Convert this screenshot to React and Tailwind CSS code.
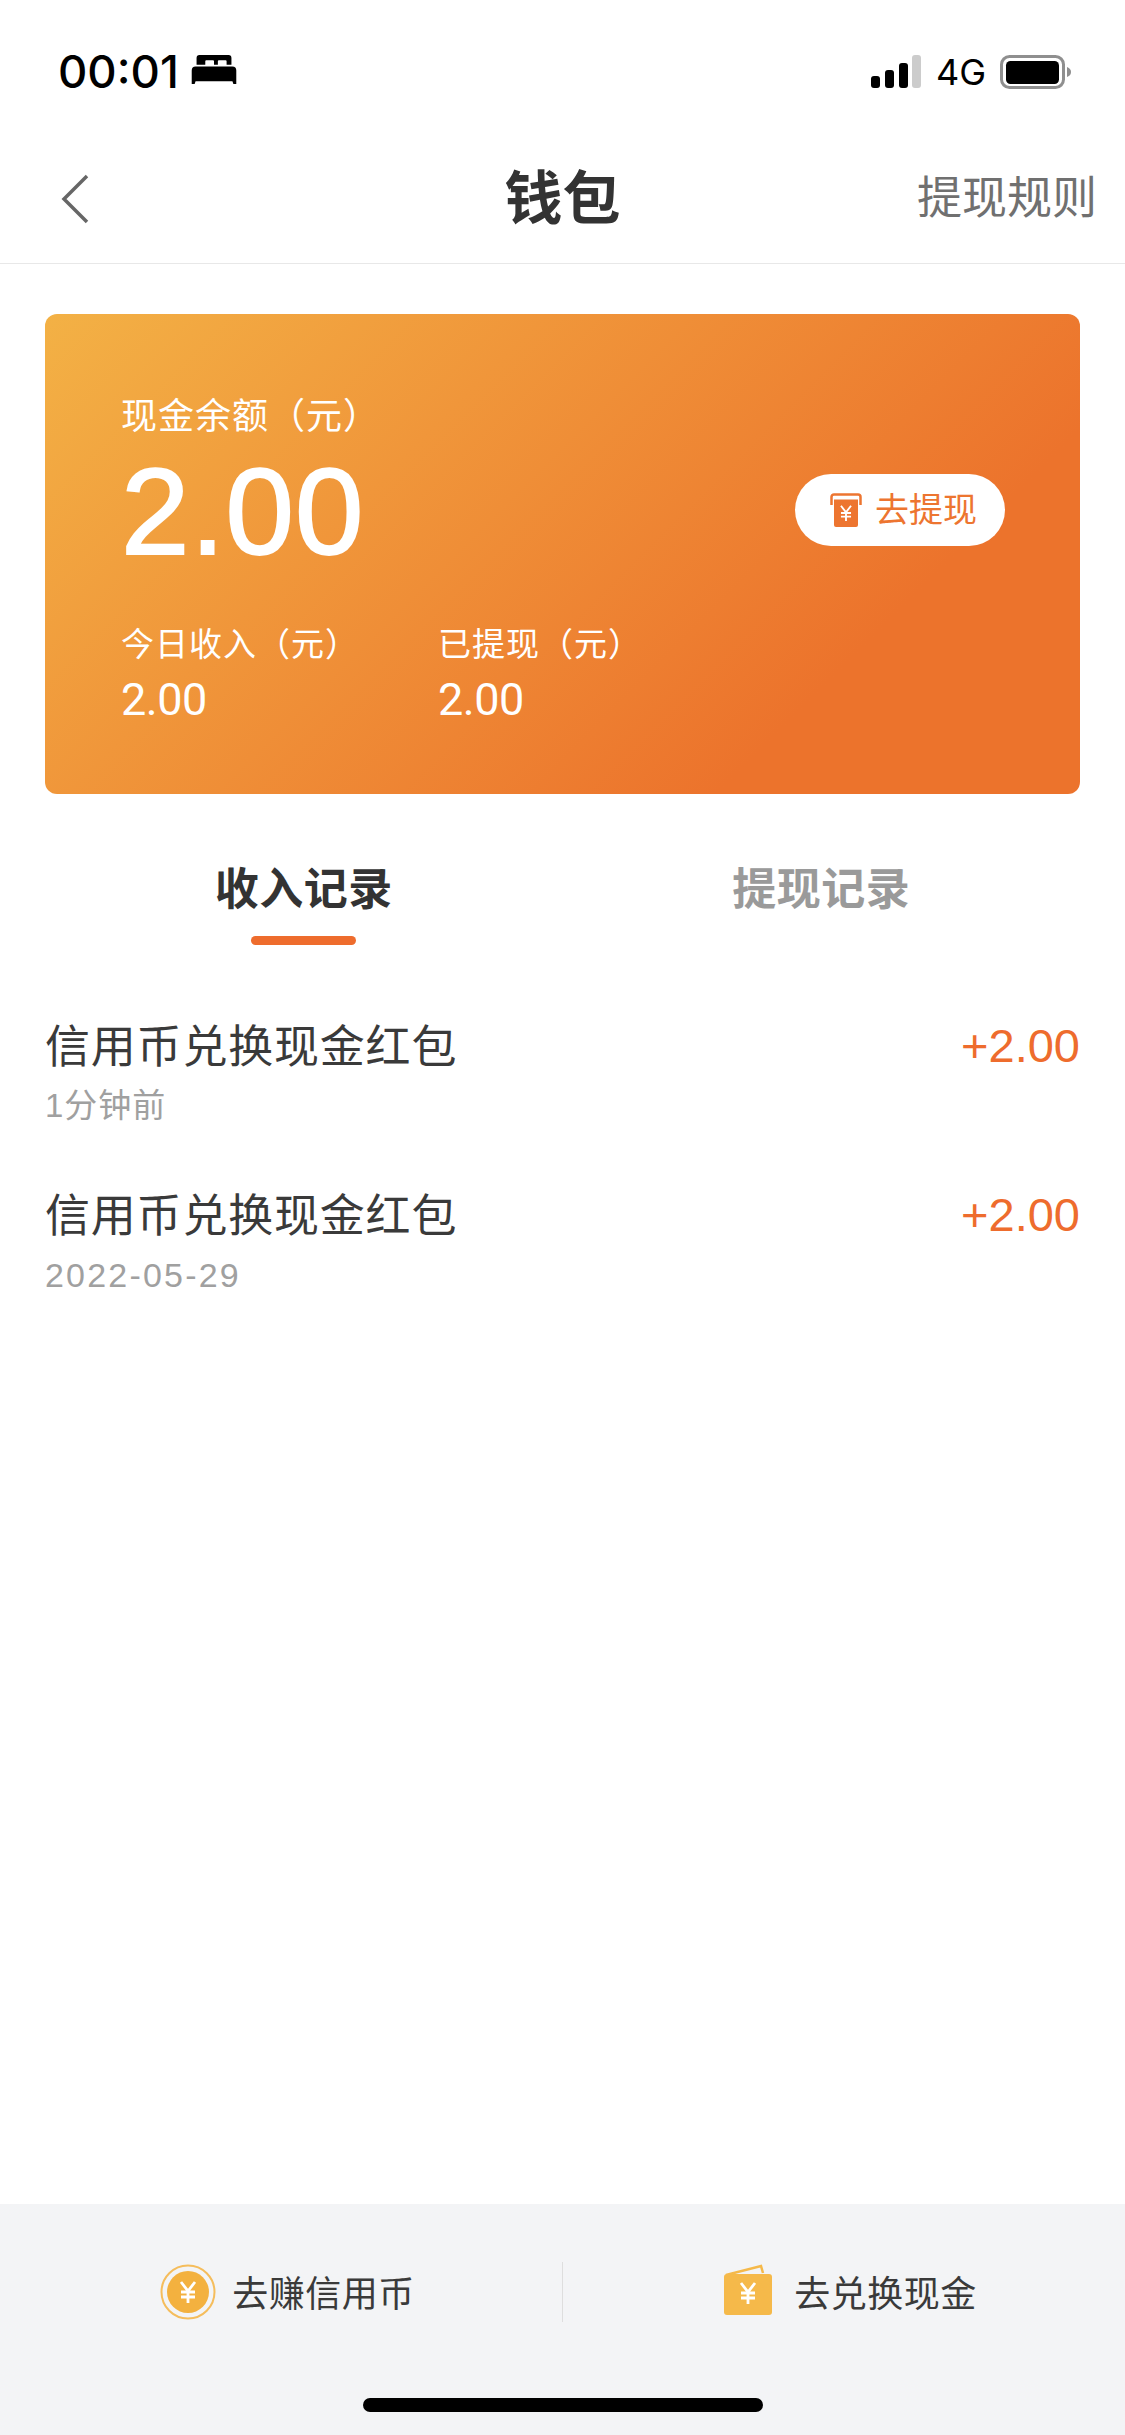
const FONT = { fontFamily: '"Liberation Sans", "Noto Sans CJK SC", sans-serif' };
const ROBOTO = { fontFamily: 'Roboto, sans-serif' };
const INTER = { fontFamily: 'Inter, sans-serif' };
const LIB = { fontFamily: '"Liberation Sans", sans-serif' };

function Bed() {
  return (
    <svg width="46" height="31" viewBox="0 0 46 32" className="block">
      <path d="M5 11V4a3 3 0 0 1 3-3h30a3 3 0 0 1 3 3v7h-5V7.500q0-1-1-1h-7q-1 0-1 1V11h-4V7.500q0-1-1-1h-7q-1 0-1 1V11z" fill="#000" />
      <path d="M4 13h38a4 4 0 0 1 4 4v14h-3l-1-3H4l-1 3H0V17a4 4 0 0 1 4-4z" fill="#000" />
    </svg>
  );
}

function Signal() {
  return (
    <svg width="50" height="34" viewBox="0 0 50 34" className="block">
      <rect x="0" y="21" width="9" height="12" rx="3" fill="#000" />
      <rect x="14" y="15" width="9" height="18" rx="3" fill="#000" />
      <rect x="28" y="8" width="9" height="25" rx="3" fill="#000" />
      <rect x="41" y="0" width="9" height="33" rx="3" fill="#ccc" />
    </svg>
  );
}

function Battery() {
  return (
    <svg width="72" height="34" viewBox="0 0 72 34" className="block">
      <rect x="1.500" y="1.500" width="62" height="31" rx="8" fill="none" stroke="#8f8f8f" strokeWidth="3" />
      <rect x="6" y="6" width="53" height="23" rx="4.500" fill="#000" />
      <path d="M67 12c3 1 4 3 4 5s-1 4-4 5z" fill="#8f8f8f" />
    </svg>
  );
}

function Yen({ x, y, s = 1, color = "#fff", w = 2.6 }) {
  return (
    <g transform={`translate(${x} ${y}) scale(${s})`} stroke={color} strokeWidth={w} fill="none">
      <path d="M-7 -10L0 -1L7 -10M0 -1V11M-7 0H7M-7 5H7" />
    </g>
  );
}

function WithdrawIcon() {
  return (
    <svg width="32" height="34" viewBox="0 0 32 34" className="block">
      <path d="M1.500 12V4a2.500 2.500 0 0 1 2.500-2.500h24a2.500 2.500 0 0 1 2.500 2.500v8" fill="none" stroke="#ed7530" strokeWidth="2.500" />
      <path d="M4 6.500h24V32a2 2 0 0 1-2 2H6a2 2 0 0 1-2-2z" fill="#ed7530" />
      <Yen x={16} y={20} s={0.72} w={2.6} />
    </svg>
  );
}

function CoinIcon() {
  return (
    <svg width="56" height="56" viewBox="0 0 56 56" className="block">
      <circle cx="28" cy="28" r="26.500" fill="none" stroke="#f5bd5c" strokeWidth="2" />
      <circle cx="28" cy="28" r="21" fill="#f3b13f" />
      <Yen x={28} y={28} s={1} w={2.8} />
    </svg>
  );
}

function WalletIcon() {
  return (
    <svg width="50" height="52" viewBox="0 0 50 52" className="block">
      <path d="M2 11L37 2l2 7" fill="none" stroke="#f5b94a" strokeWidth="2.500" />
      <rect x="0" y="10" width="48" height="41" rx="3" fill="#f5b94a" />
      <Yen x={24} y={29} s={1} w={2.8} />
    </svg>
  );
}

function Row({ title, time, timeClass }) {
  return (
    <div className="flex justify-between items-start h-[169px]">
      <div className="flex flex-col">
        <div className="text-[45px] leading-[60px] text-[#3a3a3a] tracking-[0.8px]">{title}</div>
        <div className={`leading-[44px] mt-[6px] text-[#a0a0a0] ${timeClass}`}>{time}</div>
      </div>
      <div className="text-[47px] leading-[60px] mt-[-2px] text-[#ee6c2d]">+2.00</div>
    </div>
  );
}

export default function App() {
  return (
    <div className="w-[1125px] h-[2435px] bg-white flex flex-col overflow-hidden" style={FONT}>
      <div className="h-[140px] pl-[58px] pr-[59px] flex justify-between items-start pt-[47px] shrink-0">
        <div className="flex items-center gap-[12px] h-[50px]">
          <span className="text-[45.500px] leading-[50px] font-medium text-black" style={INTER}>00:01</span>
          <span className="mt-[-6px]"><Bed /></span>
        </div>
        <div className="flex items-center h-[50px] mr-[-6px]">
          <Signal />
          <span className="ml-[15px] text-[36px] leading-[50px] text-black" style={INTER}>4G</span>
          <span className="ml-[14px]"><Battery /></span>
        </div>
      </div>

      <div className="h-[124px] shrink-0 border-b border-[#e8e8e8] flex items-center justify-between relative pl-[61px] pr-[28px] pb-[6px]">
        <svg width="30" height="50" viewBox="0 0 30 50" className="block">
          <path d="M26 2L3 25l23 23" fill="none" stroke="#666" strokeWidth="3.500" />
        </svg>
        <div className="absolute left-0 right-0 text-center text-[58px] leading-[80px] font-bold text-[#333]">钱包</div>
        <div className="text-[45px] leading-[60px] text-[#707070]">提现规则</div>
      </div>

      <div className="mx-[45px] mt-[50px] h-[480px] rounded-[12px] shrink-0 flex items-start justify-between pl-[76px] pr-[75px] pt-[78px] text-white bg-[linear-gradient(135deg,#f3b145_0%,#ec732c_76%,#ec732c_100%)]">
        <div className="flex flex-col">
          <div className="text-[36px] leading-[50px] tracking-[1px]">现金余额（元）</div>
          <div className="text-[123px] leading-[120px] mt-[10px] tracking-[1px] [-webkit-text-stroke:2px_#fff]" style={LIB}>2.00</div>
          <div className="flex mt-[50px]">
            <div className="w-[317px]">
              <div className="text-[33px] leading-[46px] tracking-[1px]">今日收入（元）</div>
              <div className="text-[45px] leading-[56px] mt-[4px] tracking-[-0.5px]" style={ROBOTO}>2.00</div>
            </div>
            <div>
              <div className="text-[33px] leading-[46px] tracking-[1px]">已提现（元）</div>
              <div className="text-[45px] leading-[56px] mt-[4px] tracking-[-0.5px]" style={ROBOTO}>2.00</div>
            </div>
          </div>
        </div>
        <div className="w-[210px] h-[72px] rounded-full bg-white flex items-center justify-center gap-[13px] mt-[82px] pl-[7px]">
          <WithdrawIcon />
          <span className="text-[34px] leading-[44px] text-[#ed7530]">去提现</span>
        </div>
      </div>

      <div className="flex shrink-0 mt-[64px] px-[45px]">
        <div className="flex-1 flex flex-col items-center">
          <div className="text-[44px] leading-[64px] font-semibold text-[#333] tracking-[0.5px]">收入记录</div>
          <div className="w-[105px] h-[9px] rounded-full bg-[#ee6c2d] mt-[14px]" />
        </div>
        <div className="flex-1 flex flex-col items-center">
          <div className="text-[44px] leading-[64px] font-semibold text-[#9a9a9a] tracking-[0.5px]">提现记录</div>
        </div>
      </div>

      <div className="flex flex-col flex-1 px-[45px] mt-[73px]">
        <Row title="信用币兑换现金红包" time="1分钟前" timeClass="text-[33px] tracking-[1px]" />
        <Row title="信用币兑换现金红包" time="2022-05-29" timeClass="text-[34px] tracking-[2.200px]" />
      </div>

      <div className="h-[231px] shrink-0 bg-[#f3f4f6] flex flex-col">
        <div className="flex items-center h-[175px]">
          <div className="flex-1 flex items-center justify-center gap-[16px] pl-[13px]">
            <CoinIcon />
            <span className="text-[36px] leading-[50px] pt-[6px] text-[#3a3a3a] tracking-[0.5px]">去赚信用币</span>
          </div>
          <div className="w-px h-[60px] bg-[#dedede]" />
          <div className="flex-1 flex items-center justify-center gap-[20px] pl-[13px]">
            <span className="mt-[-4px]"><WalletIcon /></span>
            <span className="text-[36px] leading-[50px] pt-[6px] text-[#3a3a3a] tracking-[0.5px]">去兑换现金</span>
          </div>
        </div>
        <div className="flex justify-center">
          <div className="w-[400px] h-[14px] rounded-full bg-black mt-[19px]" />
        </div>
      </div>
    </div>
  );
}
